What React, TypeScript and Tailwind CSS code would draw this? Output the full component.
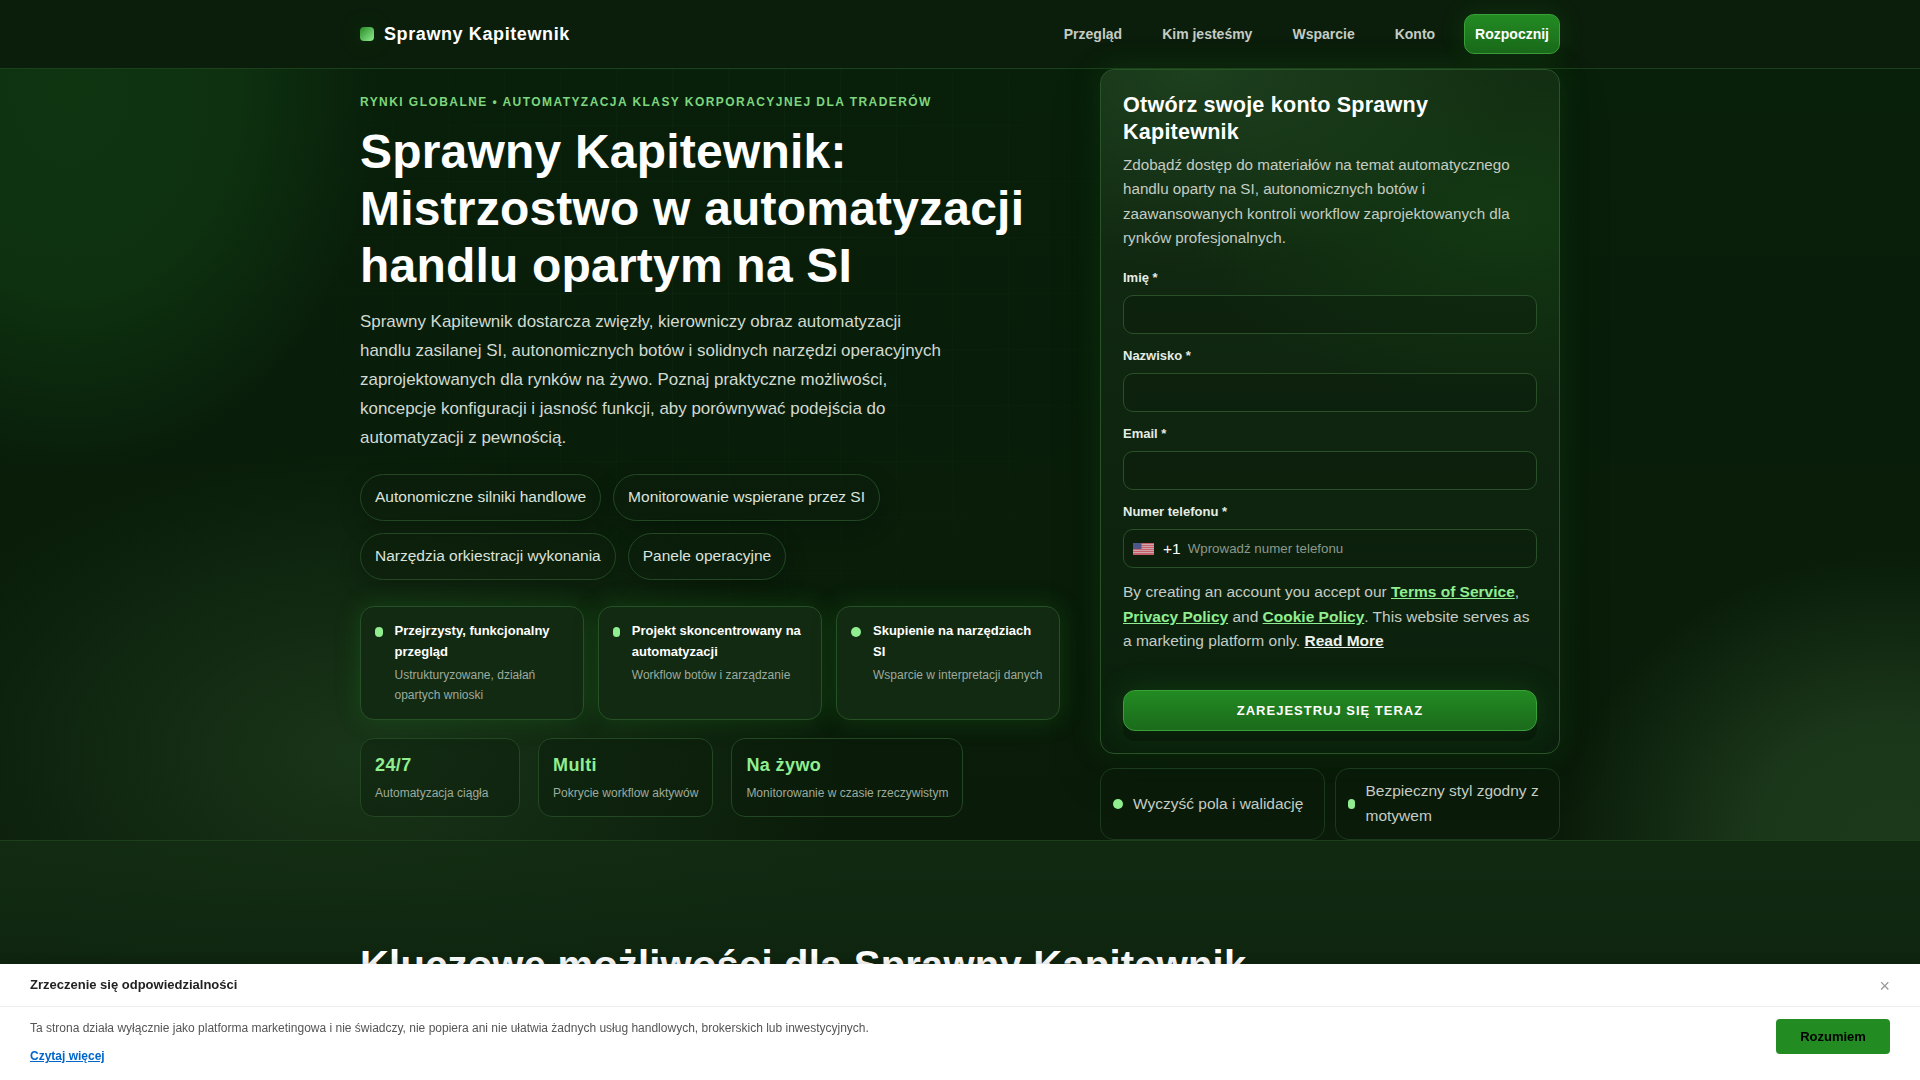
import { ReactNode } from 'react'

const navLinks = ['Przegląd', 'Kim jesteśmy', 'Wsparcie', 'Konto']

const pills = [
    'Autonomiczne silniki handlowe',
    'Monitorowanie wspierane przez SI',
    'Narzędzia orkiestracji wykonania',
    'Panele operacyjne',
]

const highlights = [
    { title: 'Przejrzysty, funkcjonalny przegląd', text: 'Ustrukturyzowane, działań opartych wnioski', dot: 'w-[7.5px]' },
    { title: 'Projekt skoncentrowany na automatyzacji', text: 'Workflow botów i zarządzanie', dot: 'w-[6.8px]' },
    { title: 'Skupienie na narzędziach SI', text: 'Wsparcie w interpretacji danych', dot: 'w-[10px]' },
]

const stats = [
    { value: '24/7', label: 'Automatyzacja ciągła' },
    { value: 'Multi', label: 'Pokrycie workflow aktywów' },
    { value: 'Na żywo', label: 'Monitorowanie w czasie rzeczywistym' },
]

const Field = ({ label, children }: { label: string; children?: ReactNode }) => (
    <div className="mb-[11px]">
        <label className="block text-[13px] leading-[21px] font-bold text-[#e6ece6]">{label}</label>
        <div className="mt-[7px] flex h-[39px] items-center rounded-[10px] border border-[#2a502a] bg-[#0a1c0a]/45 px-[9px]">
            {children}
        </div>
    </div>
)

const Flag = () => (
    <svg width="21" height="12" viewBox="0 0 21 12" className="opacity-85">
        <rect width="21" height="12" fill="#e8697c" />
        {[1, 3, 5, 7, 9].map((y) => (
            <rect key={y} y={y} width="21" height="0.8" fill="#f3d5da" />
        ))}
        <rect width="8.5" height="6" fill="#5a5f9e" />
    </svg>
)

const Header = () => (
    <header className="border-b border-[#1c401c] bg-[#0b1e0b]">
        <div className="mx-auto flex h-[68px] w-[1200px] items-center justify-between">
            <div className="flex items-center gap-[10px]">
                <span className="h-[14px] w-[14px] rounded-[4px] bg-linear-135 from-[#228b22] to-[#90ee90] shadow-[0_0_24px_rgba(34,139,34,0.2)]" />
                <span className="text-[18px] font-bold tracking-[0.6px] text-white">Sprawny Kapitewnik</span>
            </div>
            <nav className="flex items-center text-[14px] font-bold text-[#c4ccc4]">
                {navLinks.map((link) => (
                    <a key={link} className="mr-5 px-[10px]">
                        {link}
                    </a>
                ))}
                <a className="-ml-[1px] flex h-10 items-center rounded-[10px] border border-[#3aa03a] bg-linear-to-b from-[#228b22] to-[#1b6b1b] px-[10px] text-white shadow-[0_0_24px_rgba(34,139,34,0.18)]">
                    Rozpocznij
                </a>
            </nav>
        </div>
    </header>
)

const HeroText = () => (
    <div className="w-[700px]">
        <p className="mt-[23px] text-[12px] leading-5 font-bold tracking-[1.44px] text-[#7ed67e] uppercase">
            Rynki globalne • Automatyzacja klasy korporacyjnej dla traderów
        </p>
        <h1 className="mt-[11px] text-[48px] leading-[57px] font-bold tracking-[0.2px] text-white">
            Sprawny Kapitewnik: Mistrzostwo w automatyzacji handlu opartym na SI
        </h1>
        <p className="mt-[14.2px] w-[590px] text-[16.96px] leading-[28.83px] text-[#d2dad2]">
            Sprawny Kapitewnik dostarcza zwięzły, kierowniczy obraz automatyzacji handlu zasilanej SI, autonomicznych
            botów i solidnych narzędzi operacyjnych zaprojektowanych dla rynków na żywo. Poznaj praktyczne możliwości,
            koncepcje konfiguracji i jasność funkcji, aby porównywać podejścia do automatyzacji z pewnością.
        </p>
        <div className="mt-[21.8px] flex flex-wrap gap-3">
            {pills.map((pill) => (
                <span
                    key={pill}
                    className="rounded-full border border-[#234823] bg-[#0c1e0b]/60 px-[14px] py-[10px] text-[15.5px] leading-[24.8px] text-[#dce3dc] shadow-[0_8px_24px_rgba(0,0,0,0.2)]"
                >
                    {pill}
                </span>
            ))}
        </div>
        <div className="mt-[26.7px] grid grid-cols-3 gap-[14px]">
            {highlights.map((item) => (
                <div
                    key={item.title}
                    className="flex gap-3 rounded-[14px] border border-[#265026] bg-[#122912] p-[14px] pb-[13px] shadow-[0_0_24px_rgba(34,139,34,0.26)]"
                >
                    <span className={`mt-[6px] h-[10px] shrink-0 rounded-full bg-[#90ee90] ${item.dot}`} />
                    <div className="-mt-[1px]">
                        <p className="text-[13px] leading-[21px] font-bold text-white">{item.title}</p>
                        <p className="mt-[4px] text-[12px] leading-[19.8px] text-[#9dab9d]">{item.text}</p>
                    </div>
                </div>
            ))}
        </div>
        <div className="mt-[18px] flex gap-[18px]">
            {stats.map((stat) => (
                <div key={stat.value} className="min-w-40 rounded-[14px] border border-[#234623] bg-[#0a1c0a]/40 px-[14px] py-3">
                    <p className="text-[18px] leading-[29.7px] font-bold tracking-[0.4px] text-[#90ee90]">{stat.value}</p>
                    <p className="mt-[3px] text-[12px] leading-[19.8px] text-[#9dab9d]">{stat.label}</p>
                </div>
            ))}
        </div>
    </div>
)

const SignUp = () => (
    <div className="w-[460px]">
        <div className="h-[685px] rounded-[14px] border border-[#285428] bg-[radial-gradient(320px_200px_at_20%_0%,rgba(45,100,50,0.38),transparent),radial-gradient(320px_190px_at_88%_21%,rgba(24,110,24,0.24),transparent),linear-gradient(180deg,#132a12,#0a200c)] px-[22px] pt-[21px] shadow-[0_0_30px_rgba(34,139,34,0.18),0_18px_50px_rgba(0,0,0,0.22)]">
            <h2 className="text-[21.6px] leading-[27px] font-bold tracking-[0.2px] text-white">
                Otwórz swoje konto Sprawny Kapitewnik
            </h2>
            <p className="mt-2 text-[15.2px] leading-[24.3px] text-[#c4ccc4]">
                Zdobądź dostęp do materiałów na temat automatycznego handlu oparty na SI, autonomicznych botów i
                zaawansowanych kontroli workflow zaprojektowanych dla rynków profesjonalnych.
            </p>
            <form className="mt-[17px]">
                <Field label="Imię *" />
                <Field label="Nazwisko *" />
                <Field label="Email *" />
                <Field label="Numer telefonu *">
                    <Flag />
                    <span className="ml-[9px] text-[15.5px] text-white">+1</span>
                    <span className="ml-[7px] text-[13.33px] text-[#8b988b]">Wprowadź numer telefonu</span>
                </Field>
                <p className="pt-[1px] text-[15.5px] leading-[24.6px] text-[#c4ccc4]">
                    By creating an account you accept our{' '}
                    <a className="font-bold text-[#90ee90] underline">Terms of Service</a>,{' '}
                    <a className="font-bold text-[#90ee90] underline">Privacy Policy</a> and{' '}
                    <a className="font-bold text-[#90ee90] underline">Cookie Policy</a>. This website serves as a
                    marketing platform only. <a className="font-bold text-[#eef2ee] underline">Read More</a>
                </p>
                <button
                    type="button"
                    className="mt-9 h-[41px] w-full rounded-[12px] border border-[#3aa03a] bg-linear-to-b from-[#228b22] to-[#1b6b1b] text-[13px] font-bold tracking-[1px] text-white uppercase shadow-[0_10px_0_rgba(0,0,0,0.25),0_0_28px_rgba(34,139,34,0.25)]"
                >
                    Zarejestruj się teraz
                </button>
            </form>
        </div>
        <div className="mt-[14px] grid grid-cols-2 gap-[10px] text-[15.5px] leading-[24.8px] text-[#c4ccc4]">
            <div className="flex h-[72px] items-center gap-[10px] rounded-[14px] border border-[#1b3a1b] bg-[#0a1a0a]/60 px-3">
                <span className="h-[10px] w-[10px] shrink-0 rounded-full bg-[#90ee90]" />
                <span>Wyczyść pola i walidację</span>
            </div>
            <div className="flex h-[72px] items-center gap-[10.5px] rounded-[14px] border border-[#1b3a1b] bg-[#0a1a0a]/60 px-3">
                <span className="h-[10px] w-[7px] shrink-0 rounded-full bg-[#90ee90]" />
                <span>Bezpieczny styl zgodny z motywem</span>
            </div>
        </div>
    </div>
)

const Disclaimer = () => (
    <div className="fixed inset-x-0 bottom-0 h-[116px] bg-white shadow-[0_-2px_10px_rgba(0,0,0,0.15)]">
        <div className="flex h-[43px] items-center justify-between border-b border-[#eeeeee] px-[30px]">
            <p className="text-[13px] font-bold text-[#222222]">Zrzeczenie się odpowiedzialności</p>
            <span className="pt-[2px] text-[18px] leading-none text-[#999999]">×</span>
        </div>
        <div className="flex items-start justify-between px-[30px] pt-3">
            <div className="text-[12px] leading-[18px]">
                <p className="text-[#555555]">
                    Ta strona działa wyłącznie jako platforma marketingowa i nie świadczy, nie popiera ani nie ułatwia
                    żadnych usług handlowych, brokerskich lub inwestycyjnych.
                </p>
                <a className="mt-[10px] block font-bold text-[#0066cc] underline">Czytaj więcej</a>
            </div>
            <button type="button" className="h-[35px] w-[114px] rounded-[4px] bg-[#228b22] text-[13px] font-bold text-black">
                Rozumiem
            </button>
        </div>
    </div>
)

export default function App() {
    return (
        <div className="h-[1080px] overflow-hidden bg-[#0a1a0a] font-['Liberation_Sans',Arial,sans-serif]">
            <Header />
            <main className="relative h-[771px] bg-[radial-gradient(310px_380px_at_70px_20px,#0e3410,#0e3210_52%,transparent),radial-gradient(480px_300px_at_360px_685px,#193519,transparent),radial-gradient(330px_290px_at_1890px_775px,#1c391b,#1b371a_40%,transparent),linear-gradient(180deg,#081f0a,#0a1c09)]">
                <div className="absolute inset-0 bg-[linear-gradient(to_right,rgba(144,238,144,0.03)_1px,transparent_1px),linear-gradient(to_bottom,rgba(144,238,144,0.03)_1px,transparent_1px)] bg-size-[56px_56px] mask-[radial-gradient(560px_600px_at_740px_150px,black,transparent)]" />
                <div className="relative mx-auto flex w-[1200px] justify-between">
                    <HeroText />
                    <SignUp />
                </div>
            </main>
            <section className="h-[300px] border-t border-[#1c401c] bg-[radial-gradient(560px_140px_at_330px_0px,rgba(24,54,24,0.3),transparent),linear-gradient(180deg,#112911,#0b1f0c)]">
                <h2 className="mx-auto w-[1200px] pt-[100px] text-[40px] leading-[48px] font-bold tracking-[0.2px] text-white">
                    Kluczowe możliwości dla Sprawny Kapitewnik
                </h2>
            </section>
            <Disclaimer />
        </div>
    )
}
